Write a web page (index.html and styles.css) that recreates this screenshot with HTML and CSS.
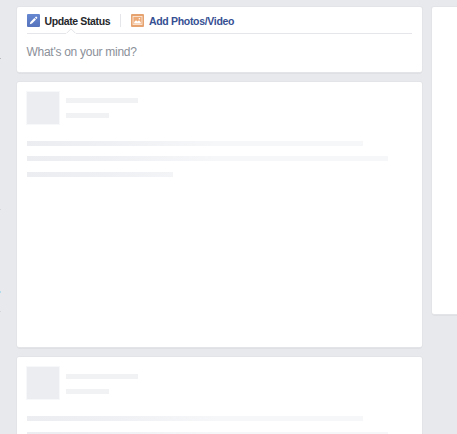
FILE: index.html
```html
<!DOCTYPE html>
<html lang="en">
<head>
<meta charset="utf-8">
<title>News Feed</title>
<link rel="stylesheet" href="styles.css">
</head>
<body>
<div class="layout">
  <div class="edge"><i class="speck grey"></i><i class="speck pale"></i><i class="speck blue"></i><i class="speck pale"></i></div>
  <main class="feed">
    <section class="card composer">
      <nav class="tabs">
        <a class="tab tab-active">
          <svg class="icon" viewBox="0 0 13 13"><defs><linearGradient id="blue" x2="0" y2="1"><stop stop-color="#6688d0"/><stop offset="1" stop-color="#5673bd"/></linearGradient></defs><rect width="13" height="13" rx="1" fill="url(#blue)"/><path d="M2.8 10.2 3.4 7.9 7.4 3.9 9 5.5 5 9.5Z M7.9 3.4 8.7 2.7Q9.1 2.4 9.6 2.8L10.1 3.3Q10.5 3.8 10.2 4.2L9.5 5Z" fill="#fff"/></svg>
          <span class="status-label">Update Status</span>
        </a>
        <span class="divider"></span>
        <a class="tab">
          <svg class="icon" viewBox="0 0 13 13"><rect width="13" height="13" rx="1" fill="#e6a26f"/><rect x="2" y="2.5" width="9" height="8" fill="#eeaa76" stroke="#fbe6d6" stroke-width=".9"/><path d="M3.2 9.6V8L5 6.3 6.5 7.4 8 6.3 9.8 8.2V9.6Z" fill="#fff"/><circle cx="8.4" cy="4.7" r=".8" fill="#fff"/></svg>
          <span class="photo-label">Add Photos/Video</span>
        </a>
        <svg class="notch" viewBox="0 0 10 6"><path d="M0 5 5 0 10 5V6H0Z" fill="#fff"/><path d="M.5 5.3 5 .8 9.5 5.3" fill="none" stroke="#e3e4e7"/></svg>
      </nav>
      <div class="prompt"><span>What's on your mind?</span></div>
    </section>
    <article class="card post">
      <header class="author">
        <div class="avatar"></div>
        <div class="meta"><div class="bar name"></div><div class="bar time"></div></div>
      </header>
      <div class="lines"><div class="bar line medium"></div><div class="bar line long"></div><div class="bar line short"></div></div>
    </article>
    <article class="card post">
      <header class="author">
        <div class="avatar"></div>
        <div class="meta"><div class="bar name"></div><div class="bar time"></div></div>
      </header>
      <div class="lines"><div class="bar line medium"></div><div class="bar line long"></div></div>
    </article>
  </main>
  <aside class="card sidebar"></aside>
</div>
</body>
</html>
```
FILE: styles.css
```css
* { box-sizing: border-box; }
body {
  margin: 0;
  height: 434px;
  overflow: hidden;
  background: #e8e9ed;
  font-family: "Liberation Sans", Arial, sans-serif;
}
.layout {
  display: grid;
  grid-template-columns: 17px 405px 10px 25px;
  align-items: start;
  height: 434px;
  padding-top: 7px;
}
.edge { display: flex; flex-direction: column; padding-top: 51px; }
.speck { width: 1px; height: 1px; }
.grey { margin-bottom: 150px; background: #b5b7bc; }
.pale { background: #d3d6da; }
.blue { height: 2px; margin: 81px 0 18px; background: #b3dcec; }
.feed { display: flex; flex-direction: column; gap: 10px; height: 427px; }
.card {
  background: #fff;
  border-radius: 2px;
  box-shadow: 0 0 0 1px #e3e4e8, 0 1px 0 #d5d7db, 0 1.5px 0 #d5d7db;
}
.composer { flex: none; height: 64.5px; padding: 0 10px; }
.tabs {
  position: relative;
  display: flex;
  align-items: center;
  height: 27px;
  border-bottom: 1px solid #e5e6e9;
}
.tab {
  display: flex;
  align-items: center;
  gap: 4.5px;
  color: #365093;
  font-size: 10.5px;
  font-weight: bold;
  line-height: 14px;
  white-space: nowrap;
}
.tab-active { width: 93px; color: #25272b; }
.status-label { padding-top: 1px; letter-spacing: -0.38px; }
.photo-label { padding: 1px 0 0 0.5px; letter-spacing: -0.32px; }
.icon { width: 13px; height: 13px; flex: none; }
.divider { width: 1px; height: 13px; margin-right: 10px; background: #e5e6e9; }
.notch { position: absolute; left: 39px; bottom: -1px; width: 10px; height: 6px; }
.prompt {
  margin-left: -0.5px;
  padding-top: 11px;
  color: #8b9099;
  font-size: 12px;
  letter-spacing: -0.28px;
  line-height: 14px;
  white-space: nowrap;
}
.post { flex: none; height: 265.6px; padding: 10px; }
.post:last-child { flex: 1; height: auto; min-height: 0; border-radius: 2px 2px 0 0; overflow: hidden; }
.author { display: flex; gap: 7px; }
.avatar {
  width: 32px;
  height: 32px;
  background: #ebedf0;
  box-shadow: 0 0 0 1px #f7f8f9;
}
.meta { display: flex; flex-direction: column; gap: 10px; padding-top: 6.4px; }
.post:last-child .meta { padding-top: 7px; }
.bar { height: 5px; background: #f1f2f4; }
.name { width: 72px; }
.time { width: 43px; }
.lines { display: flex; flex-direction: column; gap: 10.7px; padding-top: 17px; }
.line { flex: none; background: linear-gradient(90deg, #ebedf0, #eff0f3 80px, #f6f7f9 190px); }
.medium { width: 336px; }
.long { width: 361px; }
.short { width: 146px; }
.sidebar { grid-column: 4; height: 307px; border-radius: 2px 0 0 2px; }
```
